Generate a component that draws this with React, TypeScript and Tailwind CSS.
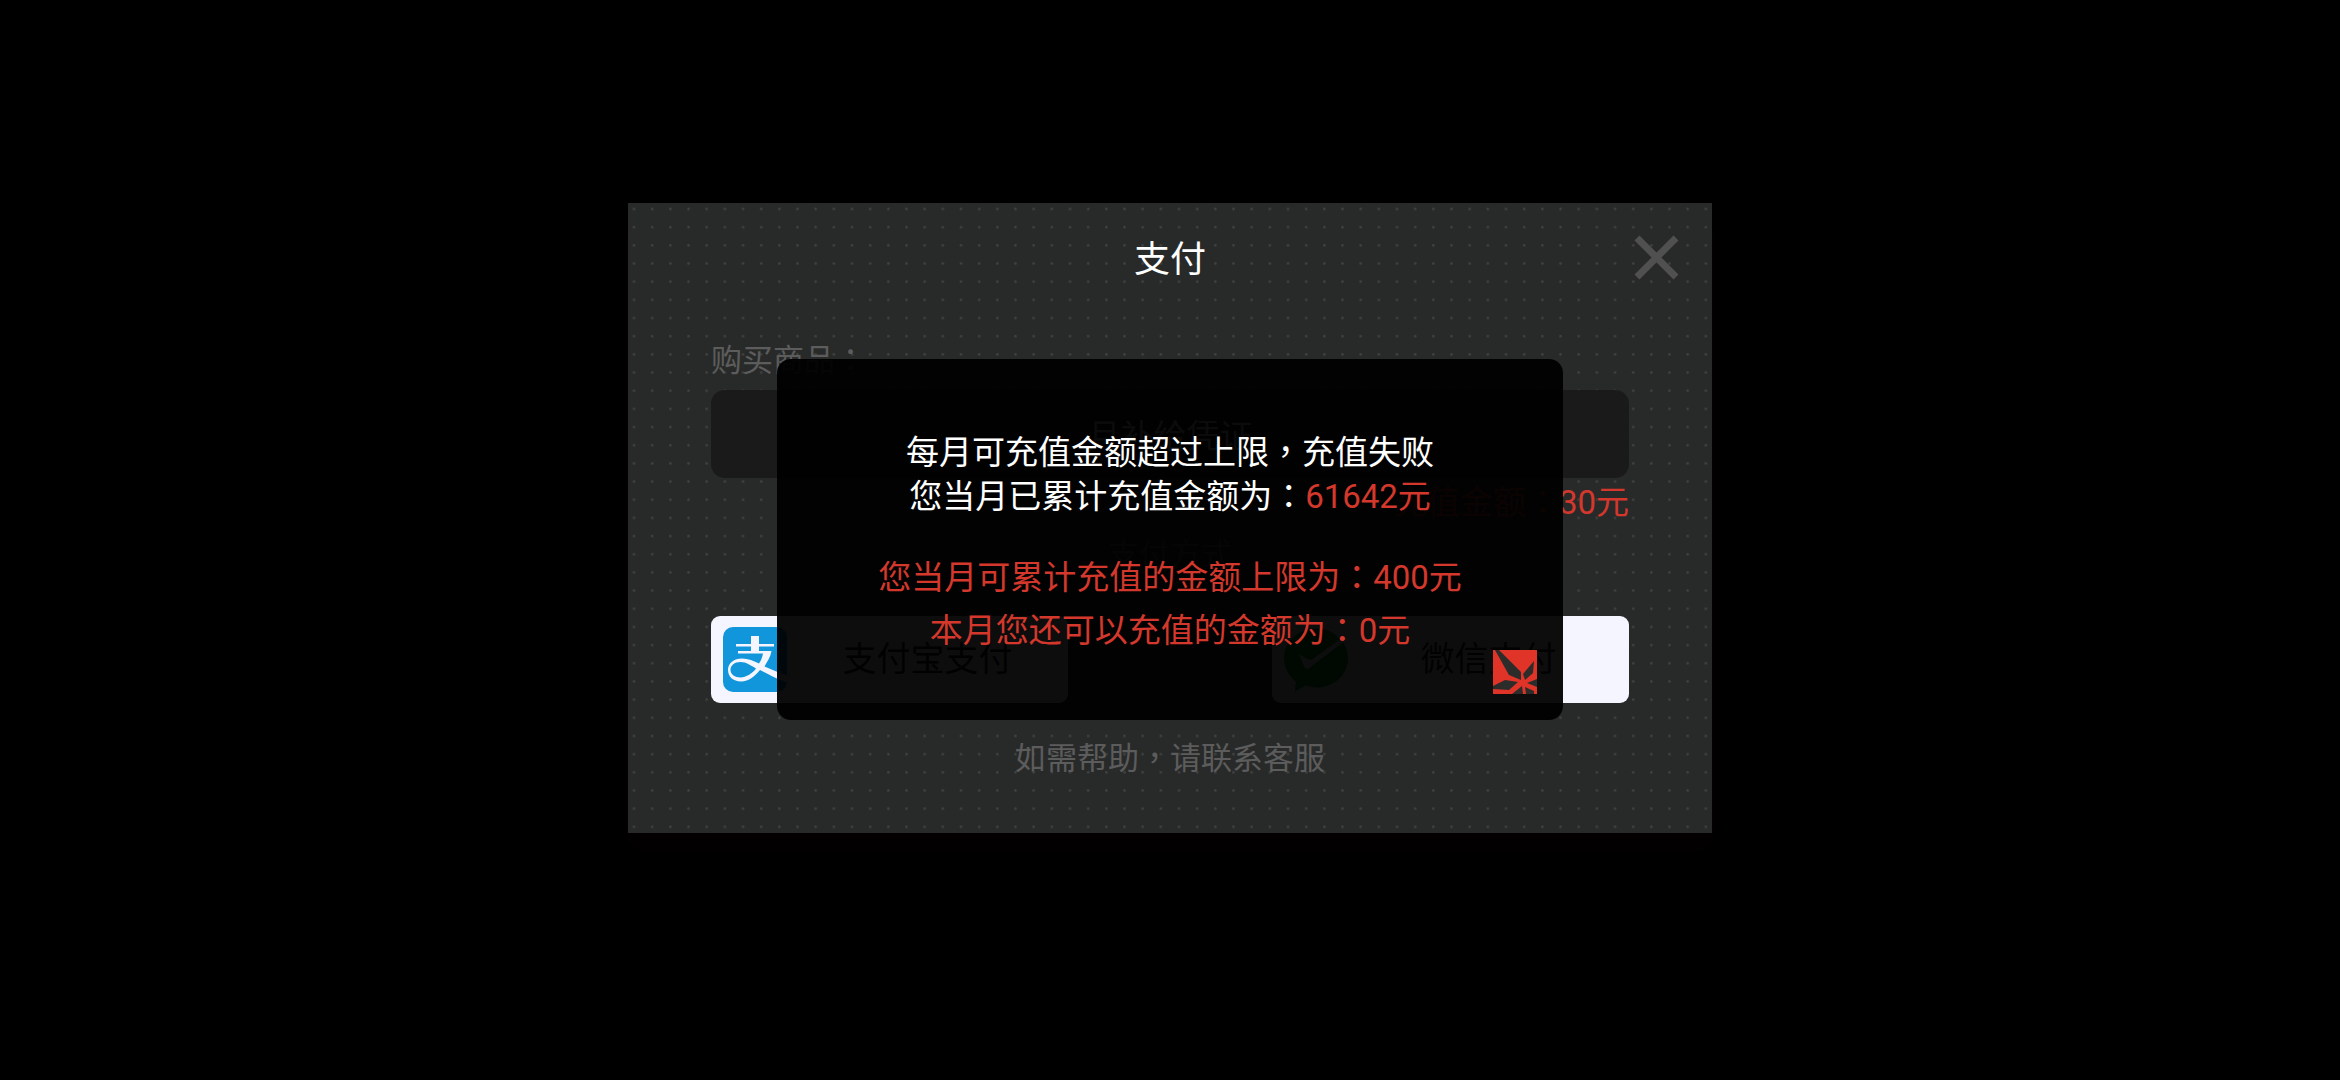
const FONT = "font-['Roboto','Noto_Sans_CJK_TC',sans-serif]";

const AlipayIcon = () => (
  <svg viewBox="0 0 64 65" className="h-[65px] w-16 shrink-0" aria-hidden="true">
    <rect width="64" height="65" rx="10" fill="#1296db" />
    <g fill="#f5f5ff">
      <path d="M28 9h8v8h15v2.500H36V24h12.500c-1 6-4 10-7 15.500 8 3.500 16 7 22.500 8.500v7c-9-2-19-8-27-12-5 6-11 11.500-19 11.500-8 0-13-5-13-11.500 0-7 6-11.500 14-11.500 6 0 12 2.500 17 5 2-3 3.500-6.500 4-10H15V24h13v-4.500H13V17h15zM17.500 35c-6 0-10 3.500-10 8s4.500 7.500 10 7.500S30 46 33 41.500c-5-3-9.500-6.500-15.500-6.500z" />
    </g>
  </svg>
);

const WechatIcon = () => (
  <svg viewBox="0 0 65 65" className="h-[65px] w-16 shrink-0" aria-hidden="true">
    <path
      d="M33 1C15 1 0 14 0 31c0 10 5 18 12 24l-1 10 11-6c4 1 7 2 11 2 18 0 32-13 32-30 0-6-2-12-5-16L26 41c-2 2-4 1-5 0l-6-14 9 5c1 1 3 1 5 0l28-20C51 5 43 1 33 1z"
      fill="#07a522"
    />
  </svg>
);

const BrandMark = () => (
  <svg viewBox="0 0 44 44" className="size-11" aria-hidden="true">
    <rect width="44" height="44" fill="#e03428" />
    <g fill="#2c2c2a">
      <path d="M2 0h4l22 22v8l-12-5z" />
      <path d="M41 11l-1 12-8 7-2-6z" />
      <path d="M0 36l12-6 13 2-9 8-16-1z" />
      <path d="M34 33l10-4v8z" />
      <path d="M19 44l10-8 1 8z" />
      <path d="M32 37l9 4v3h-8z" />
    </g>
  </svg>
);

const DotTexture = () => (
  <svg className="absolute -top-[3px] -left-[3px] h-[calc(100%+6px)] w-[calc(100%+6px)]" aria-hidden="true">
    <defs>
      <pattern id="dots" width={1 / 60} height={1 / 35}>
        <circle cx="9" cy="9" r="1.3" fill="#404141" />
      </pattern>
    </defs>
    <rect width="100%" height="100%" fill="url(#dots)" />
  </svg>
);

const payMethods = [
  { name: "支付宝支付", icon: <AlipayIcon /> },
  { name: "微信支付", icon: <WechatIcon /> },
];

const PaymentPanel = () => (
  <section className="relative overflow-hidden bg-[#282a29] px-[83px] pt-[30px] pb-[51px] text-[#5c5c5c]">
    <DotTexture />
    <div className="relative flex flex-col">
      <h1 className="text-center text-4xl leading-[54px] text-white">支付</h1>
      <button type="button" aria-label="关闭" className="absolute top-0.5 -right-[50px]">
        <svg viewBox="0 0 45 45" className="size-[45px]" aria-hidden="true">
          <path d="M3 3l39 39M42 3L3 42" stroke="#505050" strokeWidth="7" />
        </svg>
      </button>
      <label htmlFor="goods" className="mt-[51px] text-[31px] leading-[46px]">
        购买商品：
      </label>
      <input
        id="goods"
        readOnly
        value="月补给凭证"
        className="mt-1.5 h-22 w-full rounded-[14px] bg-[#1a1a1a] text-center text-[33px] text-[#d0d0d0]"
      />
      <p className="text-right text-[33px] leading-[50px] text-[#d4382c]">充值金额：30元</p>
      <p className="mt-1 text-center text-[31px] leading-[46px]">支付方式</p>
      <div className="mt-[38px] flex justify-between">
        {payMethods.map((method) => (
          <button
            type="button"
            key={method.name}
            className="flex h-[87px] w-[357px] items-center rounded-[9px] bg-[#f5f5ff] pl-3 text-[34px] text-[#222222]"
          >
            {method.icon}
            <span className="flex-1 text-center">{method.name}</span>
          </button>
        ))}
      </div>
      <a href="#help" className="mt-[33px] text-center text-[31px] leading-[46px]">
        如需帮助，请联系客服
      </a>
    </div>
  </section>
);

const LimitNotice = () => (
  <div
    role="alertdialog"
    aria-label="充值失败"
    className="relative w-[786px] rounded-[14px] bg-black/95 pt-[72px] pb-[63px] text-center text-[33px] leading-[44px] text-[#d4382c]"
  >
    <p className="text-white">每月可充值金额超过上限，充值失败</p>
    <p className="text-white">
      您当月已累计充值金额为：<span className="text-[#d4382c]">61642元</span>
    </p>
    <p className="mt-8 leading-[53px]">您当月可累计充值的金额上限为：400元</p>
    <p className="leading-[53px]">本月您还可以充值的金额为：0元</p>
    <div className="absolute right-[26px] bottom-[26px]">
      <BrandMark />
    </div>
  </div>
);

const App = () => {
  return (
    <main
      className={`${FONT} grid min-h-screen place-content-center bg-black pb-11`}
    >
      <div className="relative w-[1084px] max-w-full shadow-[0_16px_20px_#050003]">
        <PaymentPanel />
        <div className="absolute inset-0 flex items-center justify-center pt-[43px]">
          <LimitNotice />
        </div>
      </div>
    </main>
  );
};

export default App;
